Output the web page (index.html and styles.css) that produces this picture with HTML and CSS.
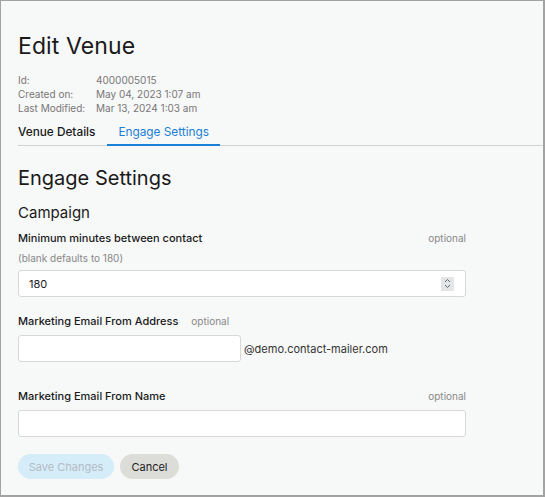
FILE: index.html
```html
<!DOCTYPE html>
<html>
<head>
<meta charset="utf-8">
<link rel="stylesheet" href="styles.css">
</head>
<body>
<div class="page">
  <h1 class="title">Edit Venue</h1>
  <div class="meta">
    <span class="meta-key">Id:</span><span class="meta-val">4000005015</span>
    <span class="meta-key">Created on:</span><span class="meta-val">May 04, 2023 1:07 am</span>
    <span class="meta-key">Last Modified:</span><span class="meta-val">Mar 13, 2024 1:03 am</span>
  </div>
  <div class="tabs">
    <div class="tab">Venue Details</div>
    <div class="tab tab-active">Engage Settings</div>
  </div>
  <div class="content">
    <h2 class="section-title">Engage Settings</h2>
    <h3 class="sub-title">Campaign</h3>

    <div class="field">
      <div class="label-row">
        <span class="label">Minimum minutes between contact</span>
        <span class="optional">optional</span>
      </div>
      <div class="hint">(blank defaults to 180)</div>
      <div class="input full first-input">
        <span class="input-text">180</span>
        <span class="spinner">
          <svg width="9" height="11" viewBox="0 0 9 11"><path d="M2 4 L4.5 1.5 L7 4" fill="none" stroke="#666" stroke-width="1"/><path d="M2 7 L4.5 9.5 L7 7" fill="none" stroke="#666" stroke-width="1"/></svg>
        </span>
      </div>
    </div>

    <div class="field field-addr">
      <div class="label-row inline">
        <span class="label">Marketing Email From Address</span>
        <span class="optional">optional</span>
      </div>
      <div class="addr-row">
        <div class="input short"></div>
        <span class="domain">@demo.contact-mailer.com</span>
      </div>
    </div>

    <div class="field field-name">
      <div class="label-row">
        <span class="label">Marketing Email From Name</span>
        <span class="optional">optional</span>
      </div>
      <div class="input full"></div>
    </div>

    <div class="actions">
      <button class="btn btn-save">Save Changes</button>
      <button class="btn btn-cancel">Cancel</button>
    </div>
  </div>
</div>
</body>
</html>
```
FILE: styles.css
```css
html, body {
  margin: 0;
  padding: 0;
}
body {
  font-family: Inter, "Liberation Sans", sans-serif;
  color: #1a1a1a;
}
.page {
  box-sizing: border-box;
  width: 545px;
  height: 497px;
  border: 1px solid #a3a3a3;
  border-right-width: 2px;
  border-bottom-width: 2px;
  background: #f7f8f8;
  padding: 30px 0 0 17px;
}
.title {
  margin: 0;
  font-size: 23px;
  font-weight: 400;
  line-height: 30px;
  letter-spacing: 0.1px;
}
.meta {
  display: grid;
  grid-template-columns: 78px auto;
  margin-top: 12px;
  font-size: 10px;
  line-height: 14px;
  color: #777;
}
.tabs {
  display: flex;
  margin-top: 10px;
  border-bottom: 1px solid #d3d3d3;
  font-size: 11.8px;
}
.tab {
  padding: 0 11px 5px 11px;
  color: #1a1a1a;
  font-weight: 500;
}
.tab:first-child {
  padding-left: 0;
  padding-right: 12px;
}
.tab-active {
  color: #1a7fd6;
  font-weight: 400;
  border-bottom: 2px solid #1a7fd6;
  margin-bottom: -1px;
}
.content {
  width: 448px;
}
.section-title {
  margin: 20px 0 0;
  font-size: 20px;
  font-weight: 400;
  line-height: 24px;
}
.sub-title {
  margin: 13px 0 0;
  font-size: 15px;
  font-weight: 400;
  line-height: 20px;
}
.field {
  margin-top: 7px;
}
.label-row {
  display: flex;
  justify-content: space-between;
  align-items: baseline;
  line-height: 16px;
}
.label-row.inline {
  justify-content: flex-start;
  gap: 13px;
}
.label {
  font-size: 11px;
  font-weight: 500;
}
.optional {
  font-size: 10px;
  color: #888;
}
.hint {
  margin-top: 6px;
  font-size: 10px;
  color: #888;
  line-height: 13px;
}
.input {
  box-sizing: border-box;
  height: 27px;
  background: #fff;
  border: 1px solid #d8d8d8;
  border-radius: 3px;
  display: flex;
  align-items: center;
  padding: 0 10px;
}
.full {
  width: 448px;
  margin-top: 6px;
}
.first-input {
  margin-top: 5px;
}
.short {
  width: 223px;
}
.input-text {
  flex: 1;
  font-size: 11px;
}
.spinner {
  width: 13px;
  height: 14px;
  background: #e4e5e7;
  display: flex;
  align-items: center;
  justify-content: center;
  margin-right: 1px;
}
.field-addr {
  margin-top: 16px;
}
.addr-row {
  display: flex;
  align-items: center;
  margin-top: 6px;
}
.domain {
  margin-left: 3px;
  font-size: 11px;
  color: #333;
}
.field-name {
  margin-top: 26px;
}
.actions {
  display: flex;
  gap: 6px;
  margin-top: 17px;
}
.btn {
  font-family: inherit;
  border: none;
  height: 25px;
  border-radius: 13px;
  font-size: 11px;
  padding: 0 10px;
}
.btn-save {
  width: 96px;
  background: #d5ecf9;
  color: #b4bcc4;
}
.btn-cancel {
  width: 59px;
  background: #dcdcd8;
  color: #222;
}
```
